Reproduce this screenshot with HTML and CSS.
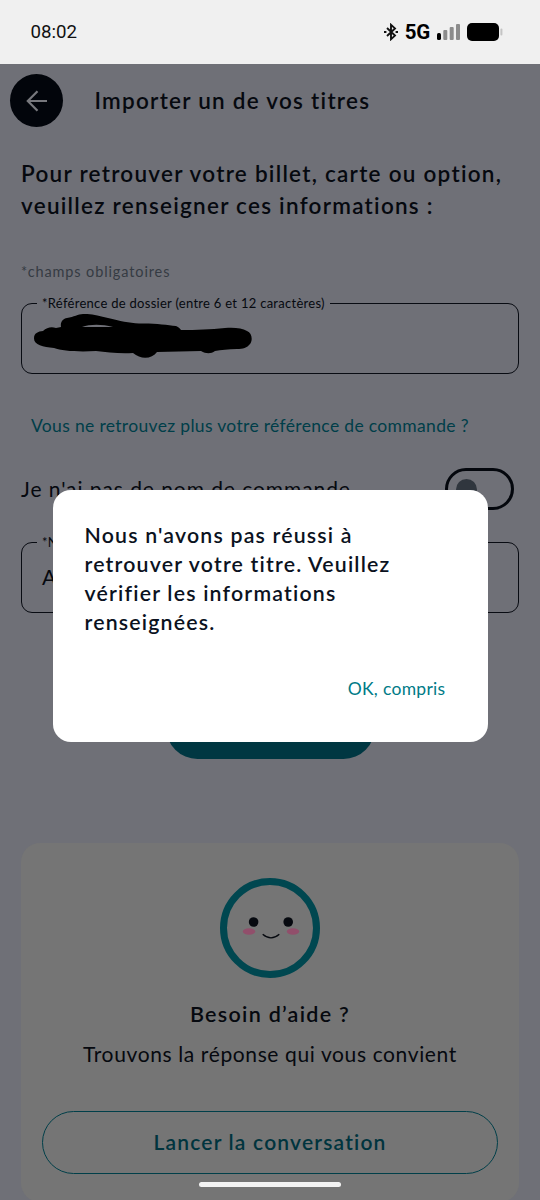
FILE: index.html
```html
<!DOCTYPE html>
<html lang="fr">
<head>
<meta charset="utf-8">
<title>Importer un de vos titres</title>
<link rel="stylesheet" href="styles.css">
</head>
<body>
<div class="screen">
  <header class="status">
    <span class="clock">08:02</span>
    <div class="indicators">
      <svg class="bt" width="14" height="18" viewBox="0 0 14 18" fill="none" stroke="#111" stroke-width="1.9"><path d="M3 5l8 7.6-4 3.6V1.8l4 3.6L3 13"/><path d="M0 9h2.4M11.6 9H14" stroke-width="2.2"/></svg>
      <span class="net">5G</span>
      <svg class="signal" width="24" height="18" viewBox="0 0 24 18"><rect x="0" y="10" width="4" height="7" rx="1.6" fill="#000"/><g fill="#8c8c8c"><rect x="6.3" y="7" width="4" height="10" rx="1"/><rect x="12.7" y="4" width="4" height="13" rx="1"/><rect x="19" y="1" width="4" height="16" rx="1"/></g></svg>
      <svg class="battery" width="36" height="18" viewBox="0 0 36 18"><rect x="0" y="0" width="32" height="18" rx="5" fill="#000"/><rect x="33.4" y="5.5" width="2" height="7" rx="1" fill="#c4c4c4"/></svg>
    </div>
  </header>

  <main class="page">
    <div class="topbar">
      <div class="back"><svg width="22" height="22" viewBox="0 0 22 22" fill="none" stroke="#77787d" stroke-width="2.2"><path d="M21 11H1.8M11.5 1.2L1.8 11l9.7 9.8"/></svg></div>
      <h1 class="title">Importer un de vos titres</h1>
    </div>
    <h2 class="intro">Pour retrouver votre billet, carte ou option,<br>veuillez renseigner ces informations :</h2>
    <p class="required">*champs obligatoires</p>
    <fieldset class="field">
      <legend>*Référence de dossier (entre 6 et 12 caractères)</legend>
      <svg class="scribble" width="220" height="46" viewBox="0 0 220 46"><path fill="#000" fill-rule="evenodd" d="M0 24.5C0 19 4 17.500 9 17C13 13 18 12.500 22 14L27 13C26 8 29 4.500 33 4C40 3 44 0 49 0C57-.5 65 2 74 4C86 7 95 9 105 9.500C120 9 133 11 142 12C145 13 146 15 147 16C163 16 176 15.500 191 14C201 13.500 208 14 213 17C218 19 219 26 216 30C213 34 209 35 203 35C194 35 187 36 181 37C177 40 172 40 167 37L123 38C118 45 107 46 99 39C85 40 73 38 62 37C44 38 28 37 20 34C9 33 0 31 0 24.500ZM48 13L79 13C68 10 56 10 48 13Z"/></svg>
    </fieldset>
    <a class="lost">Vous ne retrouvez plus votre référence de commande ?</a>
    <div class="option">
      <span class="option-label">Je n'ai pas de nom de commande</span>
      <span class="toggle"><i class="thumb"></i></span>
    </div>
    <fieldset class="field field-name">
      <legend>*Nom</legend>
      <span class="value">A</span>
    </fieldset>
    <div class="submit"></div>

    <section class="help">
      <svg class="face" width="100" height="100" viewBox="0 0 100 100"><circle cx="50" cy="50" r="46.500" fill="none" stroke="#004750" stroke-width="7"/><g fill="#06090f"><circle cx="33.600" cy="44" r="4.800"/><circle cx="68.200" cy="44" r="4.800"/></g><g fill="#914f6b"><ellipse cx="29" cy="53.500" rx="6.200" ry="3.200"/><ellipse cx="73" cy="53.500" rx="6.200" ry="3.200"/></g><path d="M42.700 56.300Q51 63.500 59.300 56.300" fill="none" stroke="#06090f" stroke-width="1.300"/></svg>
      <h3 class="help-title">Besoin d’aide ?</h3>
      <p class="help-text">Trouvons la réponse qui vous convient</p>
      <div class="chat"><span>Lancer la conversation</span></div>
    </section>
  </main>

  <div class="dialog" role="dialog">
    <p class="message">Nous n'avons pas réussi à<br>retrouver votre titre. Veuillez<br>vérifier les informations<br>renseignées.</p>
    <a class="ok">OK, compris</a>
  </div>
  <div class="home"></div>
</div>
</body>
</html>
```
FILE: styles.css
```css
* { box-sizing: border-box; }
body, h1, h2, h3, p { margin: 0; }
body { font-family: Lato, "Liberation Sans", sans-serif; color: #06090f; }
.screen { position: relative; width: 540px; height: 1200px; overflow: hidden; background: #6f7077; }
.status { height: 64px; background: #f0f0f0; display: flex; align-items: center; justify-content: space-between; padding: 0 37px 0 30.5px; color: #111; font-family: Roboto, sans-serif; }
.clock { font-size: 18.7px; }
.indicators { display: flex; align-items: center; }
.net { font-size: 20.5px; font-weight: 700; letter-spacing: -.3px; margin: 0 7px 0 7px; line-height: 18px; color: #000; }
.battery { margin-left: 6px; }

.page { padding: 0 21px; }
.topbar { height: 73px; display: flex; align-items: center; margin-left: -11px; }
.back { width: 53px; height: 53px; border-radius: 50%; background: #02050b; display: grid; place-items: center; }
.title { margin-left: 31.5px; font-size: 22.5px; font-weight: 600; line-height: 26px; letter-spacing: 1.26px; white-space: nowrap; }
.intro { margin-top: 21px; font-size: 22.5px; font-weight: 600; line-height: 32px; letter-spacing: 1.26px; white-space: nowrap; }
.required { margin-top: 41px; font-size: 14.5px; line-height: 18px; letter-spacing: .88px; color: #353b43; }
.field { margin: 15px 0 0; padding: 0 20px 0 15px; width: 498px; height: 78px; border: 1.5px solid #080b12; border-radius: 11px; min-width: 0; }
.field legend { padding: 0 5px; font-size: 13px; line-height: 15px; height: 15px; letter-spacing: .28px; white-space: nowrap; }
.scribble { display: block; margin: 3px 0 0 -3px; }
.lost { display: block; margin: 41px 0 0 10px; font-size: 17.5px; line-height: 22px; letter-spacing: .33px; color: #003e49; white-space: nowrap; }
.option { margin-top: 31px; height: 42px; display: flex; align-items: center; justify-content: space-between; padding-right: 5px; font-size: 21px; letter-spacing: .93px; white-space: nowrap; }
.option-label { padding-bottom: 1px; }
.toggle { width: 69px; height: 42px; border: 3px solid #04070d; border-radius: 21px; display: flex; align-items: center; padding-left: 8px; }
.thumb { width: 21px; height: 21px; border-radius: 50%; background: #30363e; }
.field-name { margin-top: 25px; }
.value { display: block; margin: 14px 0 0 5px; font-size: 21px; line-height: 26px; }
.submit { width: 209px; height: 63px; margin: 83px auto 0; border-radius: 32px; background: #003742; }

.help { margin-top: 84px; height: 359px; border-radius: 19px; background: #757575; display: flex; flex-direction: column; align-items: center; padding: 34.5px 21px 0; }
.face { flex: none; }
.help-title { margin-top: 22.5px; font-size: 21.5px; font-weight: 600; line-height: 28px; letter-spacing: 1.3px; }
.help-text { margin-top: 12px; font-size: 21px; line-height: 28px; letter-spacing: .62px; white-space: nowrap; }
.chat { margin-top: 43px; width: 456px; height: 63px; border: 1.5px solid #003f49; border-radius: 32px; display: grid; place-items: center; padding-bottom: 2px; color: #00343e; font-size: 21px; font-weight: 600; letter-spacing: 1.2px; }

.dialog { position: absolute; left: 52.5px; top: 490px; width: 435px; height: 252px; border-radius: 18px; background: #fff; padding: 31px 42px 0 32px; display: flex; flex-direction: column; }
.message { font-size: 21.3px; font-weight: 600; line-height: 29px; letter-spacing: 1.19px; white-space: nowrap; color: #0b121e; }
.ok { align-self: flex-end; margin-top: 41px; font-size: 17.5px; line-height: 22px; letter-spacing: .3px; color: #007b87; }
.home { position: absolute; left: 199px; top: 1182px; width: 142px; height: 5px; border-radius: 3px; background: #f3f3f3; }
```
